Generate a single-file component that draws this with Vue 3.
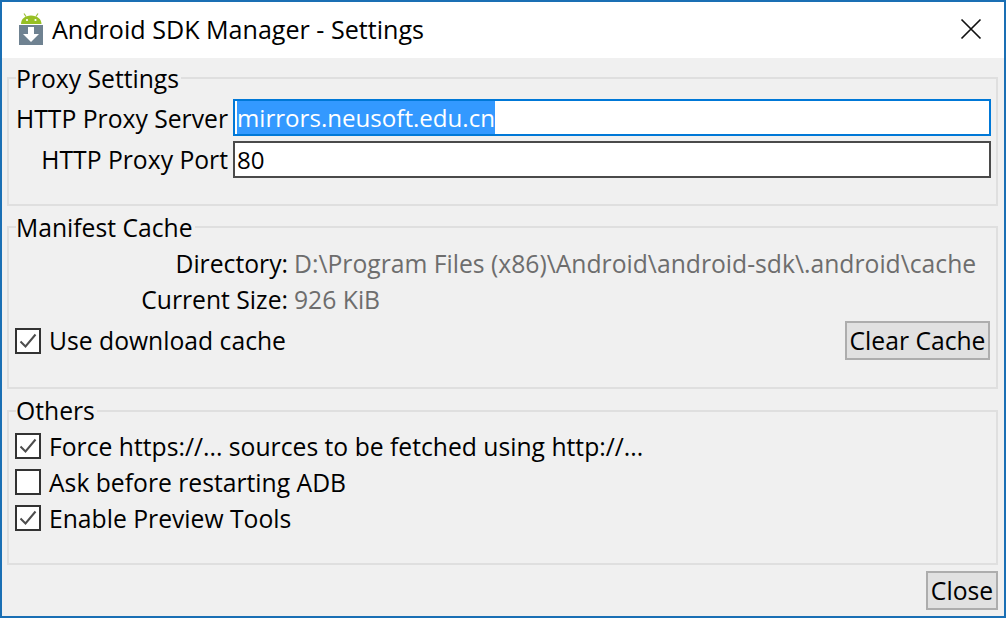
<script setup>
const others = [
  { label: 'Force https://... sources to be fetched using http://...', checked: true },
  { label: 'Ask before restarting ADB', checked: false },
  { label: 'Enable Preview Tools', checked: true },
]
</script>

<template>
  <div class="window">
    <header class="titlebar">
      <svg class="app-icon" width="26" height="32" viewBox="0 0 26 32">
        <path d="M6 0.500l2 3M20 0.500l-2 3" stroke="#9cbf3c" stroke-width="1.200" fill="none" />
        <path d="M3 11C3 6 7 2.500 13 2.500S23.500 6 23.500 11z" fill="#97c024" />
        <circle cx="9" cy="7" r="1.100" fill="#fff" />
        <circle cx="17.500" cy="7" r="1.100" fill="#fff" />
        <rect x="1" y="12" width="24" height="20" fill="#6f8291" />
        <path d="M10 14h6v7h5l-8 8-8-8h5z" fill="#fff" />
      </svg>
      <span class="title">Android SDK Manager - Settings</span>
      <svg class="close-x" width="22" height="22" viewBox="0 0 22 22">
        <path d="M1.500 1.500l19 19M20.500 1.500l-19 19" stroke="#111" stroke-width="1.700" fill="none" />
      </svg>
    </header>

    <main class="content">
      <fieldset class="group proxy">
        <legend>Proxy Settings</legend>
        <div class="group-body proxy-body">
          <div class="field">
            <label class="field-label first-label">HTTP Proxy Server</label>
            <div class="input focused"><span class="selected">mirrors.neusoft.edu.cn</span></div>
          </div>
          <div class="field">
            <label class="field-label second-label">HTTP Proxy Port</label>
            <div class="input"><span class="port-value">80</span></div>
          </div>
        </div>
      </fieldset>

      <fieldset class="group cache">
        <legend>Manifest Cache</legend>
        <div class="group-body cache-body">
          <div class="info">
            <span class="info-label">Directory:</span>
            <span class="info-value">D:\Program Files (x86)\Android\android-sdk\.android\cache</span>
          </div>
          <div class="info">
            <span class="info-label">Current Size:</span>
            <span class="info-value">926 KiB</span>
          </div>
          <div class="cache-row">
            <div class="check-row">
              <span class="box">
                <svg width="22" height="22" viewBox="0 0 22 22"><path d="M3.500 11.500l5 5L18.500 4.500" stroke="#4d4d4d" stroke-width="2" fill="none" /></svg>
              </span>
              <span>Use download cache</span>
            </div>
            <button class="btn clear">Clear Cache</button>
          </div>
        </div>
      </fieldset>

      <fieldset class="group others">
        <legend>Others</legend>
        <div class="group-body others-body">
          <div v-for="o in others" :key="o.label" class="check-row">
            <span class="box">
              <svg v-if="o.checked" width="22" height="22" viewBox="0 0 22 22"><path d="M3.500 11.500l5 5L18.500 4.500" stroke="#4d4d4d" stroke-width="2" fill="none" /></svg>
            </span>
            <span>{{ o.label }}</span>
          </div>
        </div>
      </fieldset>

      <footer class="footer">
        <button class="btn close">Close</button>
      </footer>
    </main>
  </div>
</template>

<style>
html, body { margin: 0; background: #f0f0f0; }
</style>

<style scoped>
.window {
  box-sizing: border-box;
  width: 1006px;
  height: 618px;
  border: 2px solid #1a6fb4;
  display: flex;
  flex-direction: column;
  font-family: "Open Sans", "Noto Sans", sans-serif;
  font-size: 24.7px;
  color: #000;
  background: #f0f0f0;
  overflow: hidden;
}
.titlebar {
  height: 56px;
  box-sizing: border-box;
  flex: none;
  background: #fff;
  display: flex;
  align-items: center;
  padding: 0 22px 2px 16px;
}
.app-icon { flex: none; }
.title { margin-left: 8px; flex: 1; font-size: 25.1px; }
.close-x { flex: none; }
.content {
  flex: 1;
  display: flex;
  flex-direction: column;
  padding: 0 6px 0 5px;
}
.group {
  margin: 0;
  padding: 0;
  border: 2px solid #dfdfdf;
  box-sizing: border-box;
  min-width: 0;
}
.group legend {
  padding: 0 2px 0 0;
  margin-left: 7px;
  line-height: 32px;
  height: 32px;
}
.proxy legend, .cache legend { line-height: 34px; }
.proxy { margin-top: 4px; height: 144px; }
.cache { margin-top: 5px; height: 178px; }
.others { margin-top: 6px; height: 170px; }
.proxy-body { padding: 5px 5px 0 0; }
.cache-body { padding: 3px 6px 0 6px; }
.others-body { padding: 1px 6px 0 6px; }
.field {
  display: flex;
  align-items: center;
  gap: 5px;
  margin-bottom: 5px;
}
.field-label {
  flex: none;
  width: 219px;
  text-align: right;
}
.first-label { padding-top: 1px; }
.second-label { padding-bottom: 1px; }
.input {
  flex: 1;
  height: 37px;
  box-sizing: border-box;
  border: 2px solid #4a4a4a;
  background: #fff;
  display: flex;
  align-items: center;
  padding-left: 2px;
  line-height: 33px;
  font-size: 24.1px;
}
.input.focused { border-color: #0078d7; }
.selected { background: #3399ff; color: #fff; }
.port-value { padding-bottom: 1px; }
.info {
  display: flex;
  gap: 6px;
  height: 36px;
  line-height: 36px;
}
.info-label { width: 273px; text-align: right; flex: none; }
.info-value { color: #6d6d6d; white-space: nowrap; }
.cache-row {
  display: flex;
  align-items: center;
  justify-content: space-between;
  margin-top: 3px;
}
.check-row {
  display: flex;
  align-items: center;
  gap: 8px;
  height: 36px;
}
.box {
  box-sizing: border-box;
  width: 26px;
  height: 26px;
  border: 2px solid #333;
  background: #fff;
  flex: none;
  display: flex;
}
.btn {
  font: inherit;
  color: #000;
  background: #e1e1e1;
  border: 2px solid #adadad;
  box-sizing: border-box;
  height: 39px;
  padding: 0;
}
.clear { width: 145px; }
.close { width: 72px; }
.footer {
  display: flex;
  justify-content: flex-end;
  margin-top: 6px;
}
</style>
